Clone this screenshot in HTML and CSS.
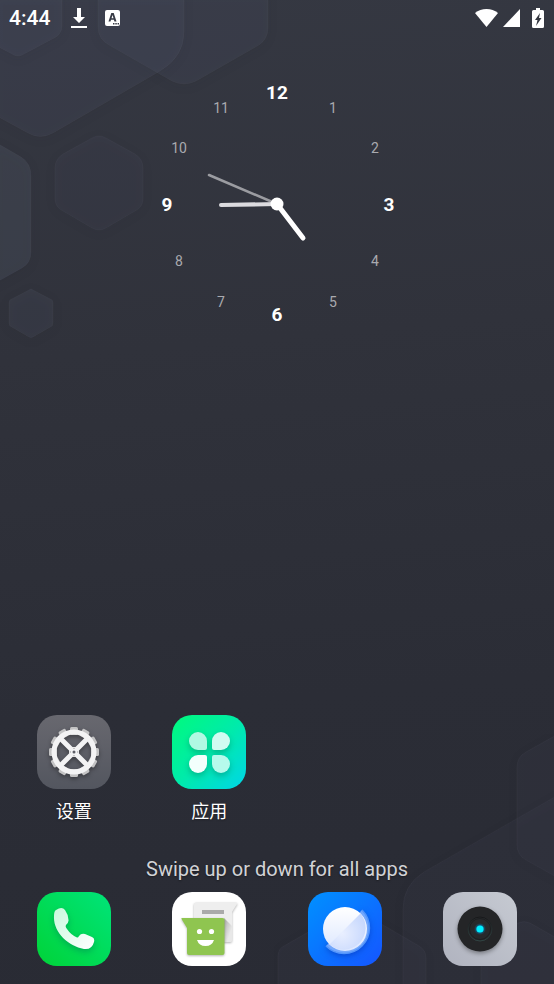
FILE: index.html
```html
<!DOCTYPE html>
<html lang="zh-CN">
<head>
    <meta charset="UTF-8">
    <meta name="viewport" content="width=device-width, initial-scale=1.0">
    <title>Launcher</title>
    <link rel="stylesheet" href="styles.css">
</head>
<body>
    <!-- Wallpaper -->
    <svg class="wallpaper wallpaper-top" viewBox="0 0 280 350" aria-hidden="true">
        <g class="hex">
            <path d="M98-5V27Q98 39 109 45L172 81Q184 87 196 81L259 45Q268 39 268 28V-5Z"/>
            <path d="M-5 115L28 133Q40 140 53 133L160 71Q184 57 184 32V-5H-5Z"/>
            <path d="M-5 45L12 54Q18 58 24 54L56 37Q62 33 62 26V-5H-5Z"/>
            <path class="hex-strong" d="M-5 142L21 157Q31 163 31 176V252Q31 263 22 268L-5 283Z"/>
            <path class="hex-faint" d="M92 138Q99 134 106 138L135 154Q143 159 143 168V199Q143 207 135 211L106 228Q99 232 92 228L63 211Q55 207 55 199V168Q55 159 63 154Z"/>
            <path d="M29 290Q31 288 33 290L52 300Q53 301 53 303V323Q53 325 52 326L33 337Q31 338 29 337L10 326Q9 325 9 323V303Q9 301 10 300Z"/>
        </g>
    </svg>
    <svg class="wallpaper wallpaper-bottom" viewBox="274 734 280 250" aria-hidden="true">
        <g class="hex hex-bottom">
            <path d="M560 733L526 752Q517 757 517 767V845Q517 855 526 860L560 879Z"/>
            <path d="M560 794L424 872Q403 885 403 909V990H560Z"/>
            <path d="M278 990V956Q278 949 284 946L345 911Q352 907 359 911L419 946Q426 950 426 958V990Z"/>
            <path d="M481 990V951Q481 944 487 941L518 923Q524 920 530 923L560 940V990Z"/>
        </g>
    </svg>

    <header class="status-bar">
        <div class="status-group">
            <time class="status-time">4:44</time>
            <svg class="status-download" width="16" height="22" viewBox="0 0 16 22" fill="#fff" aria-label="Download">
                <path d="M6 1H10V10H14L8 16L2 10H6ZM0 19H16V21H0Z"/>
            </svg>
            <svg class="status-input" width="15" height="16" viewBox="0 0 15 16" aria-label="Input method">
                <rect width="15" height="16" rx="2" fill="#fff"/>
                <path d="M6.300 3H8.700L11.500 11.500H9.400L8.900 9.800H6L5.500 11.500H3.500ZM6.500 8.200H8.500L7.500 5Z" fill="#373a45"/>
                <path d="M8 13H9.500V14.500H8ZM10.300 13H11.800V14.500H10.300ZM12.600 13H14V14.500H12.600Z" fill="#373a45"/>
            </svg>
        </div>
        <div class="status-group">
            <svg width="23" height="18" viewBox="0 0 23 18" fill="#fff" aria-label="Wi-Fi">
                <path d="M0 4Q5 0 11.500 0T23 4L11.500 18Z"/>
            </svg>
            <svg class="status-signal" width="17" height="18" viewBox="0 0 17 18" fill="#fff" aria-label="Signal">
                <path d="M17 0V18H0Z"/>
            </svg>
            <svg class="status-battery" width="12" height="20" viewBox="0 0 12 20" aria-label="Battery charging">
                <path d="M4 0H8V2H10.500Q12 2 12 3.500V18.500Q12 20 10.500 20H1.500Q0 20 0 18.500V3.500Q0 2 1.500 2H4Z" fill="#fff"/>
                <path d="M8 5L3 12H5.500L4 18L9.500 10H7Z" fill="#343740"/>
            </svg>
        </div>
    </header>

    <main class="home">
        <!-- Clock -->
        <svg class="clock" viewBox="0 0 260 260" role="img" aria-label="Clock">
            <g class="clock-hours">
                <text x="186" y="39">1</text>
                <text x="228" y="79">2</text>
                <text x="228" y="192">4</text>
                <text x="186" y="233">5</text>
                <text x="74" y="233">7</text>
                <text x="32" y="192">8</text>
                <text x="32" y="79">10</text>
                <text x="74" y="39">11</text>
            </g>
            <g class="clock-quarters">
                <text x="130" y="25">12</text>
                <text x="242" y="137">3</text>
                <text x="130" y="247">6</text>
                <text x="20" y="137">9</text>
            </g>
            <g stroke-linecap="round">
                <line x1="130" y1="130" x2="62" y2="101" stroke="#9b9ca1" stroke-width="2.500"/>
                <line x1="130" y1="130" x2="74" y2="131" stroke="#dcdbdf" stroke-width="4"/>
                <line x1="130" y1="130" x2="156" y2="164" stroke="#fff" stroke-width="5"/>
            </g>
            <circle cx="130" cy="130" r="6.500" fill="#fff"/>
        </svg>

        <!-- Apps -->
        <section class="app-grid">
            <button class="app" type="button">
                <svg class="app-icon" viewBox="0 0 74 74" aria-hidden="true">
                    <defs>
                        <linearGradient id="setBg" x1="0" y1="0" x2="0" y2="1">
                            <stop offset="0" stop-color="#68686f"/>
                            <stop offset="1" stop-color="#53565f"/>
                        </linearGradient>
                        <rect id="tooth" x="33" y="12" width="8" height="8" rx="1.500"/>
                    </defs>
                    <rect width="74" height="74" rx="20" fill="url(#setBg)"/>
                    <g class="icon-shadow">
                        <g fill="#c3c3c4">
                            <use href="#tooth"/>
                            <use href="#tooth" transform="rotate(30 37 37)"/>
                            <use href="#tooth" transform="rotate(60 37 37)"/>
                            <use href="#tooth" transform="rotate(90 37 37)"/>
                            <use href="#tooth" transform="rotate(120 37 37)"/>
                            <use href="#tooth" transform="rotate(150 37 37)"/>
                            <use href="#tooth" transform="rotate(180 37 37)"/>
                            <use href="#tooth" transform="rotate(210 37 37)"/>
                            <use href="#tooth" transform="rotate(240 37 37)"/>
                            <use href="#tooth" transform="rotate(270 37 37)"/>
                            <use href="#tooth" transform="rotate(300 37 37)"/>
                            <use href="#tooth" transform="rotate(330 37 37)"/>
                        </g>
                        <circle cx="37" cy="37" r="20" fill="none" stroke="#f3f3f4" stroke-width="5"/>
                        <path d="M23 23L51 51M51 23L23 51" stroke="#f3f3f4" stroke-width="5"/>
                        <circle cx="37" cy="37" r="5" fill="#f3f3f4"/>
                    </g>
                    <circle cx="37" cy="37" r="1.500" fill="#5c5e66"/>
                    <path d="M37 33V34M37 40V41M33 37H34M40 37H41" stroke="#999" stroke-width="1"/>
                </svg>
                <span class="app-label">设置</span>
            </button>
            <button class="app" type="button">
                <svg class="app-icon" viewBox="0 0 74 74" aria-hidden="true">
                    <defs>
                        <linearGradient id="appsBg" x1="0" y1="0" x2="1" y2="1">
                            <stop offset="0" stop-color="#00fa7c"/>
                            <stop offset=".5" stop-color="#00ebaa"/>
                            <stop offset="1" stop-color="#00d5e8"/>
                        </linearGradient>
                    </defs>
                    <rect width="74" height="74" rx="20" fill="url(#appsBg)"/>
                    <g class="icon-shadow-green">
                        <path d="M26 17A9 9 0 0 0 26 35H33Q35 35 35 33V26A9 9 0 0 0 26 17Z" fill="#b0f9e3"/>
                        <path d="M49 17A9 9 0 0 1 49 35H42Q40 35 40 33V26A9 9 0 0 1 49 17Z" fill="#d0fbf1"/>
                        <path d="M26 58A9 9 0 0 1 26 40H33Q35 40 35 42V49A9 9 0 0 1 26 58Z" fill="#f3fffc"/>
                        <path d="M49 58A9 9 0 0 0 49 40H42Q40 40 40 42V49A9 9 0 0 0 49 58Z" fill="#b6faec"/>
                    </g>
                </svg>
                <span class="app-label">应用</span>
            </button>
        </section>

        <p class="hint">Swipe up or down for all apps</p>

        <!-- Dock -->
        <nav class="dock">
            <button class="app" type="button" aria-label="Phone">
                <svg class="app-icon" viewBox="0 0 74 74" aria-hidden="true">
                    <defs>
                        <linearGradient id="phoneBg" x1="1" y1="0" x2="0" y2="1">
                            <stop offset="0" stop-color="#00e479"/>
                            <stop offset="1" stop-color="#00d338"/>
                        </linearGradient>
                        <linearGradient id="phoneFg" x1="0" y1="0" x2="1" y2="1">
                            <stop offset="0" stop-color="#c9f9dd"/>
                            <stop offset="1" stop-color="#fff"/>
                        </linearGradient>
                    </defs>
                    <rect width="74" height="74" rx="20" fill="url(#phoneBg)"/>
                    <path class="icon-shadow-green" d="M19 18Q25 14 28 18Q31 22 31.500 28Q32 30 29 33Q28 35 30 37Q34 43 40 45.500Q41 46 42 44Q44 41 48 42L55 45Q58 46 57 50Q55 58 47 57C31 54 16 40 17 24Q17 19 19 18Z" fill="url(#phoneFg)"/>
                </svg>
            </button>
            <button class="app" type="button" aria-label="Messages">
                <svg class="app-icon" viewBox="0 0 74 74" aria-hidden="true">
                    <defs>
                        <linearGradient id="msgShade" x1="0" y1="0" x2="1" y2="1">
                            <stop offset="0" stop-color="#aaa"/>
                            <stop offset=".7" stop-color="#e8e8e8"/>
                        </linearGradient>
                    </defs>
                    <rect width="74" height="74" rx="20" fill="#fff"/>
                    <path class="icon-shadow-light" d="M24 10.500H64.500Q66 10.500 65 12L60 20V48Q60 50 58 50H24Q22 50 22 48V12.500Q22 10.500 24 10.500Z" fill="#eee"/>
                    <path d="M52 26L60 34V48Q60 50 58 50H52Z" fill="url(#msgShade)"/>
                    <path d="M30 18H52V22H30Z" fill="#aaa"/>
                    <path class="icon-shadow-light" d="M10 26H50.500Q52.500 26 52.500 28V61Q52.500 63 50.500 63H17Q15 63 15 61V36L9.500 27Q9 26 10 26Z" fill="#8fc550"/>
                    <circle cx="27.500" cy="39.500" r="2.600" fill="#fff"/>
                    <circle cx="39.500" cy="39.500" r="2.600" fill="#fff"/>
                    <path d="M25 48H42Q40 54 33.500 54T25 48Z" fill="#fff"/>
                </svg>
            </button>
            <button class="app" type="button" aria-label="Browser">
                <svg class="app-icon" viewBox="0 0 74 74" aria-hidden="true">
                    <defs>
                        <linearGradient id="webBg" x1="0" y1="0" x2="1" y2="1">
                            <stop offset="0" stop-color="#0091ff"/>
                            <stop offset="1" stop-color="#1555ff"/>
                        </linearGradient>
                        <linearGradient id="webDisc" x1="0" y1="0" x2="0" y2="1">
                            <stop offset="0" stop-color="#fff"/>
                            <stop offset="1" stop-color="#dce7ff"/>
                        </linearGradient>
                        <radialGradient id="webHalf" cx=".35" cy=".55" r=".7">
                            <stop offset="0" stop-color="#e9efff"/>
                            <stop offset="1" stop-color="#c6d7fd"/>
                        </radialGradient>
                    </defs>
                    <rect width="74" height="74" rx="20" fill="url(#webBg)"/>
                    <path class="icon-shadow-blue" d="M54 18A25 25 0 0 1 18 54Z" fill="#73a7fc"/>
                    <path d="M54 18A25 25 0 0 1 18 54" fill="none" stroke="#5295fc" stroke-width="1.500"/>
                    <circle cx="37" cy="37" r="22" fill="url(#webDisc)"/>
                    <path d="M52.500 21.500A22 22 0 0 1 21.500 52.500Z" fill="url(#webHalf)"/>
                </svg>
            </button>
            <button class="app" type="button" aria-label="Camera">
                <svg class="app-icon" viewBox="0 0 74 74" aria-hidden="true">
                    <defs>
                        <linearGradient id="camBg" x1="1" y1="0" x2="0" y2="1">
                            <stop offset="0" stop-color="#c6cad2"/>
                            <stop offset="1" stop-color="#b0b3bf"/>
                        </linearGradient>
                        <linearGradient id="camRing" x1="0" y1="0" x2="0" y2="1">
                            <stop offset="0" stop-color="#17181a"/>
                            <stop offset="1" stop-color="#304443"/>
                        </linearGradient>
                        <radialGradient id="camGlow">
                            <stop offset=".5" stop-color="#0080c0" stop-opacity=".7"/>
                            <stop offset="1" stop-color="#0080c0" stop-opacity="0"/>
                        </radialGradient>
                    </defs>
                    <rect width="74" height="74" rx="20" fill="url(#camBg)"/>
                    <circle class="icon-shadow" cx="37" cy="37" r="22.500" fill="#242527"/>
                    <circle cx="37" cy="37" r="12" fill="#27292b" stroke="url(#camRing)" stroke-width="1"/>
                    <circle cx="37" cy="37" r="10.500" fill="none" stroke="#1d1f21" stroke-width="1"/>
                    <circle cx="37" cy="37" r="6" fill="url(#camGlow)"/>
                    <circle cx="37" cy="37" r="3.600" fill="#00efff"/>
                </svg>
            </button>
        </nav>
    </main>
</body>
</html>
```
FILE: styles.css
```css
:root {
    --bg-top: #353842;
    --bg-bottom: #292b34;
    --text-color: #fff;
    --icon-size: 74px;
}

* {
    margin: 0;
    padding: 0;
    box-sizing: border-box;
}

body {
    position: relative;
    display: flex;
    flex-direction: column;
    min-height: 100vh;
    overflow-x: hidden;
    font-family: Roboto, "Noto Sans CJK SC", sans-serif;
    color: var(--text-color);
    background: linear-gradient(175deg, var(--bg-top), #30323b 35%, #2b2d36 70%, var(--bg-bottom));
}

/* Wallpaper hexagons, behind everything else */
.wallpaper {
    position: absolute;
    z-index: -1;
    width: 280px;
}

.wallpaper-top {
    top: 0;
    left: 0;
}

.wallpaper-bottom {
    right: 0;
    bottom: 0;
}

.hex path {
    fill: rgba(120, 126, 152, 0.11);
    stroke: rgba(150, 158, 180, 0.05);
    stroke-width: 1;
    filter: drop-shadow(0 2px 4px rgba(20, 21, 30, 0.6));
}

.hex .hex-strong {
    fill: rgba(130, 140, 160, 0.14);
}

.hex .hex-faint {
    fill: rgba(110, 112, 155, 0.08);
}

.hex-bottom path {
    fill: rgba(120, 124, 155, 0.06);
    stroke: rgba(150, 158, 180, 0.05);
}

/* Status bar */
.status-bar {
    display: flex;
    justify-content: space-between;
    align-items: center;
    height: 36px;
    padding: 0 10px 0 9px;
}

.status-group {
    display: flex;
    align-items: center;
}

.status-time {
    font-size: 21px;
    font-weight: 500;
    line-height: 24px;
}

.status-download {
    margin-left: 21px;
}

.status-input {
    margin-left: 18px;
}

.status-signal {
    margin-left: 5px;
}

.status-battery {
    margin-left: 12px;
}

/* Home screen */
.home {
    flex: 1;
    display: flex;
    flex-direction: column;
    padding: 38px 6px 18px;
}

.clock {
    align-self: center;
    width: 260px;
    height: 260px;
    margin-bottom: auto;
    text-anchor: middle;
}

.clock-hours {
    font-size: 14px;
    fill: #a9aaaf;
}

.clock-quarters {
    font-size: 19px;
    font-weight: 700;
    fill: var(--text-color);
}

.app-grid,
.dock {
    display: grid;
    grid-template-columns: repeat(4, 1fr);
    justify-items: center;
}

.app {
    display: flex;
    flex-direction: column;
    align-items: center;
    gap: 11px;
    border: none;
    background: none;
    color: inherit;
    font-family: inherit;
    cursor: pointer;
}

.app-icon {
    display: block;
    width: var(--icon-size);
    height: var(--icon-size);
}

.app-label {
    font-size: 18px;
    line-height: 24px;
    text-shadow: 0 1px 2px rgba(0, 0, 0, 0.3);
}

.hint {
    margin: 33px 0 11px;
    font-size: 20px;
    line-height: 24px;
    text-align: center;
    color: #d2d3d6;
    text-shadow: 0 1px 2px rgba(0, 0, 0, 0.4);
}

.icon-shadow {
    filter: drop-shadow(0 2px 2px rgba(0, 0, 0, 0.35));
}

.icon-shadow-green {
    filter: drop-shadow(0 3px 3px rgba(0, 110, 80, 0.4));
}

.icon-shadow-blue {
    filter: drop-shadow(0 2px 3px rgba(0, 30, 150, 0.5));
}

.icon-shadow-light {
    filter: drop-shadow(0 1px 1px rgba(0, 0, 0, 0.3));
}
```
